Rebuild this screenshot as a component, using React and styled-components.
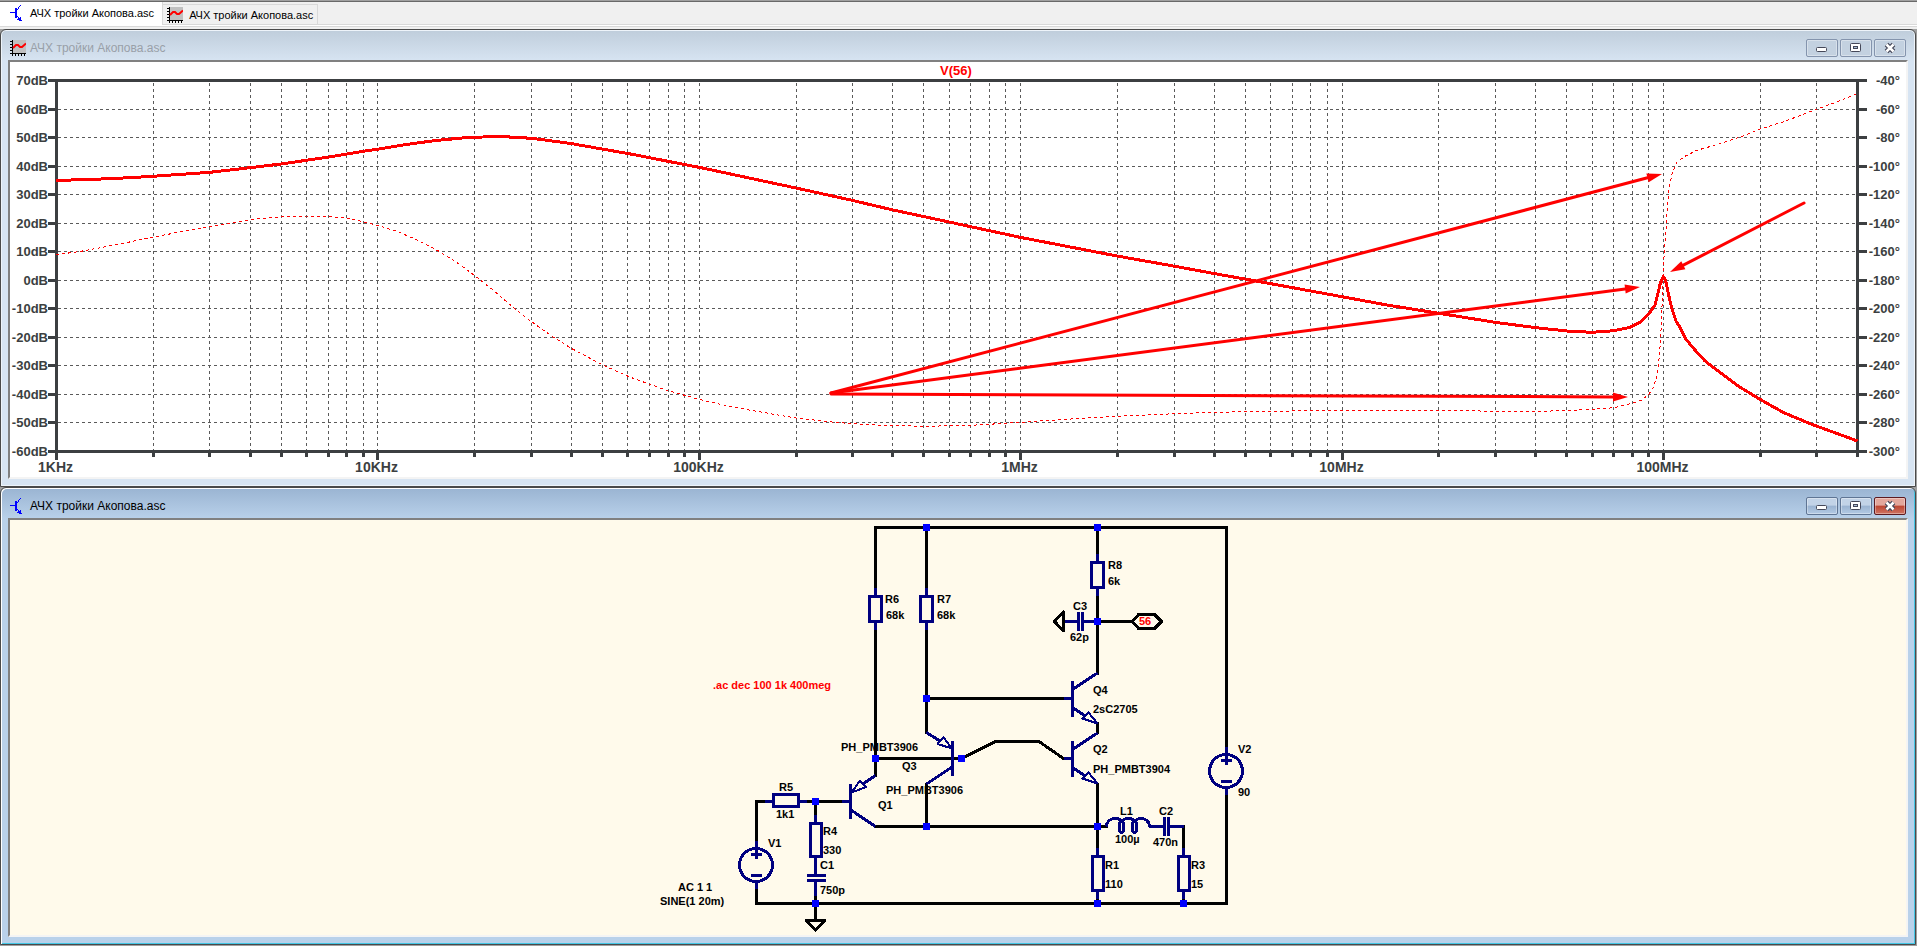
import React from "react";
import styled, { createGlobalStyle } from "styled-components";

const GlobalStyle = createGlobalStyle`
  * {
    box-sizing: border-box;
  }
  body {
    margin: 0;
    background: #a0a0a0;
  }
`;

const Desktop = styled.div`
  display: flex;
  flex-direction: column;
  padding: 0 1px 1px 0;
`;

const TabBar = styled.div`
  display: flex;
  align-items: flex-start;
  height: 29px;
  margin-right: -1px;
  background: linear-gradient(#f0f0f0 23px, #d9d9d9 23px, #d9d9d9 24px, #fff 24px, #fff 25px, #d9d9d9 25px, #d9d9d9 26px, #f0f0f0 26px);
  border-top: 1px solid #a0a0a0;
  box-shadow: inset 0 1px 0 #696969;
`;

const Tab = styled.button`
  display: flex;
  align-items: center;
  gap: ${(p) => (p.$active ? 4 : 6)}px;
  height: ${(p) => (p.$active ? 23 : 20)}px;
  margin: ${(p) => (p.$active ? 1 : 3)}px 0 0;
  padding: 0 ${(p) => (p.$active ? 8 : 4)}px ${(p) => (p.$active ? 2 : 0)}px ${(p) => (p.$active ? 10 : 4)}px;
  border: 0 solid #d9d9d9;
  border-width: ${(p) => (p.$active ? "0 1px 0 0" : "1px 1px 0 0")};
  background: ${(p) => (p.$active ? "#fff" : "#f0f0f0")};
  color: #000;
  font: 11px "Liberation Sans", sans-serif;
  white-space: nowrap;
`;

const Frame = styled.section`
  padding: 1px 7px 7px;
  border: 1px solid #4a4a4a;
  border-radius: 6px 6px 0 0;
  background: ${(p) =>
    p.$active
      ? "linear-gradient(#9ab4d2, #b9d1ea 31px)"
      : "linear-gradient(#bfcddb, #d7e4f2 31px)"};
  box-shadow: ${(p) =>
    p.$active
      ? "inset 1px 1px 0 #fff, inset -1px -1px 0 #43c6e4"
      : "inset 0 0 0 1px #eef4fa"};
`;

const TitleBar = styled.header`
  display: flex;
  align-items: center;
  gap: 4px;
  height: 29px;
  padding: 8px 2px 3px;
`;

const Title = styled.h2`
  flex: 1;
  margin: 0;
  color: ${(p) => (p.$active ? "#000" : "#99a0a8")};
  font: 12px "Liberation Sans", sans-serif;
`;

const Controls = styled.div`
  display: flex;
  gap: 2px;
`;

const blueFace = "linear-gradient(#c2d3e7 0 45%, #9ab3d1 50%, #b3cae4)";
const redFace = "linear-gradient(#e3a79c 0 45%, #bd4531 50%, #cf7463)";

const ControlButton = styled.button`
  display: flex;
  align-items: center;
  justify-content: center;
  width: 32px;
  height: 18px;
  padding: 0;
  border: 1px solid ${(p) => (p.$danger ? "#5d1a20" : p.$active ? "#5f7594" : "#8494ad")};
  border-radius: 2px;
  background: ${(p) => (p.$danger ? redFace : p.$active ? blueFace : "#c3d1e0")};
  box-shadow: inset 0 0 0 1px rgba(255, 255, 255, 0.35);
`;

const Pane = styled.div`
  border: 2px solid;
  border-color: #808080 #f4f4f4 #f4f4f4 #808080;
  background: ${(p) => p.$color};
`;

const Drawing = styled.svg`
  display: block;
  width: 100%;
  height: auto;
`;

const AxisText = styled.text`
  fill: #3c3f41;
  font: bold ${(p) => p.$size || 13}px "Liberation Sans", sans-serif;
`;

const TraceName = styled(AxisText)`
  fill: #f00;
`;

const PartText = styled.text`
  fill: ${(p) => p.$color || "#000"};
  font: bold 11px "Liberation Sans", sans-serif;
`;

function TransistorIcon() {
  return (
    <svg width="16" height="16" viewBox="0 0 16 16" shapeRendering="crispEdges" aria-hidden="true">
      <path d="M0 7h5v1h-5zM5 3h2v10h-2zM7 4h1v1h-1zM8 3h1v1h-1zM8 2h1v1h-1zM9 1h1v1h-1zM10 0h1v1h-1zM7 11h1v1h-1zM8 12h1v2h-1zM9 13h1v3h-1zM7 14h2v1h-2zM10 12h1v4h-1zM11 15h1v1h-1z" fill="#00f" />
    </svg>
  );
}

function WaveIcon() {
  return (
    <svg width="16" height="16" viewBox="0 0 16 16" aria-hidden="true">
      <path d="M2 0h14v13H2z" fill="#c0c0c0" />
      <path d="M2 0h1v16h-1zM0 13h16v1H0zM0 1h2v1H0zM0 4h2v1H0zM0 7h2v1H0zM0 10h2v1H0zM5 14h1v2h-1zM8 14h1v2h-1zM11 14h1v2h-1zM14 14h1v2h-1z" fill="#000" />
      <path d="M3 8L6 5H8L10 7H12L16 3.500" fill="none" stroke="#f00" strokeWidth="2" />
    </svg>
  );
}

function MinimizeIcon() {
  return (
    <svg width="12" height="12" viewBox="0 0 12 12" aria-hidden="true">
      <rect x="0.500" y="5.500" width="10" height="4" rx="1" fill="#fff" stroke="#454859" />
    </svg>
  );
}

function RestoreIcon() {
  return (
    <svg width="12" height="12" viewBox="0 0 12 12" aria-hidden="true">
      <rect x="0.500" y="1.500" width="10" height="8" rx="1" fill="#fff" stroke="#454859" />
      <rect x="3.500" y="4.500" width="4" height="2" fill="#a9bdd6" stroke="#454859" />
    </svg>
  );
}

function CloseIcon() {
  return (
    <svg width="12" height="12" viewBox="0 0 12 12" aria-hidden="true">
      <path d="M2.500 2.500L9.500 9.500M9.500 2.500L2.500 9.500" stroke="#454859" strokeWidth="5" />
      <path d="M2.500 2.500L9.500 9.500M9.500 2.500L2.500 9.500" stroke="#fff" strokeWidth="2.500" />
    </svg>
  );
}

function Window({ title, icon, active, color, children }) {
  return (
    <Frame $active={active}>
      <TitleBar>
        {icon}
        <Title $active={active}>{title}</Title>
        <Controls>
          <ControlButton $active={active} aria-label="Свернуть"><MinimizeIcon /></ControlButton>
          <ControlButton $active={active} aria-label="Развернуть"><RestoreIcon /></ControlButton>
          <ControlButton $active={active} $danger={active} aria-label="Закрыть"><CloseIcon /></ControlButton>
        </Controls>
      </TitleBar>
      <Pane $color={color}>{children}</Pane>
    </Frame>
  );
}

/* ---------- frequency response ---------- */

const LEFT = 56;
const RIGHT = 1857;
const TOP = 80;
const BOTTOM = 451;
const DECADE = 321.4;

const freqX = (decade, n) => Math.round(LEFT + DECADE * (decade + Math.log10(n))) + 0.5;
const rowY = (i) => Math.round(TOP + ((BOTTOM - TOP) * i) / 13) + 0.5;

const ticks = [];
for (let d = 0; d < 6; d++) {
  for (let n = 1; n < 10; n++) {
    if (d === 5 && n > 4) break;
    ticks.push({ x: freqX(d, n), major: n === 1, edge: (d === 0 && n === 1) || (d === 5 && n === 4) });
  }
}
const rows = Array.from({ length: 14 }, (_, i) => i);
const decades = ["1KHz", "10KHz", "100KHz", "1MHz", "10MHz", "100MHz"];

const magnitude = [
  [56, 180.5], [111, 178.7], [153, 176.3], [210, 172.3], [250, 167.7], [281, 164], [329, 157],
  [363, 151.3], [377, 149.3], [405, 144.7], [434, 140.7], [462, 138], [493, 136.5], [519, 137.3],
  [540, 139.3], [572, 143.7], [602, 149], [629, 153.7], [668, 161.3], [699, 167.3], [796, 188],
  [852, 200.3], [893, 210], [949, 222], [1020, 237.3], [1117, 256], [1175, 266.3], [1215, 273.7],
  [1256, 281], [1342, 296.7], [1387, 305], [1439, 313.3], [1495, 322.3], [1536, 327.7],
  [1567, 331], [1592, 332.3], [1614, 330.7], [1630, 327.3], [1641, 321.7], [1650, 312.3],
  [1655, 305], [1658, 293.3], [1660.7, 281.7], [1663.3, 276.5], [1665.7, 281], [1668.3, 293.3],
  [1671.7, 308.3], [1676, 321], [1680, 327.3], [1686, 339.3], [1695, 350], [1705, 361],
  [1720, 372.3], [1738, 386], [1760, 399.3], [1783, 412.3], [1810, 423.7], [1833, 432], [1857.5, 441],
];

const phase = [
  [56, 254.7], [81, 251.3], [111, 245.7], [153, 237.3], [181, 231.7], [210, 226.3], [250, 219.7],
  [281, 216.7], [307, 216], [329, 216.7], [347, 218.3], [363, 221.7], [377, 225.3], [397, 231.3],
  [417, 240], [438, 250.7], [458, 263.3], [474, 275], [493, 290], [513, 307.3], [531, 321.3],
  [554, 337.7], [572, 348.7], [602, 364.7], [629, 376.7], [649, 384], [668, 390.7], [699, 399.3],
  [725, 405.3], [753, 410.7], [796, 418], [835, 422.3], [852, 423.7], [884, 425.3], [925, 426.3],
  [971, 425.3], [1006, 423.3], [1035, 421.3], [1082, 418.3], [1117, 416.3], [1175, 413.7],
  [1215, 412.3], [1271, 411.3], [1320, 410.5], [1342, 410.5], [1453, 410.5], [1495, 411.3],
  [1536, 411.3], [1567, 410.7], [1592, 409.3], [1614, 407.7], [1632, 403.3], [1641, 400.3],
  [1649, 394.3], [1653, 387.7], [1656.7, 376.7], [1659.3, 356.7], [1660.7, 336.7], [1662, 306.7],
  [1663.3, 266.7], [1665.3, 240], [1667.3, 210], [1669, 190], [1671.7, 175], [1676.7, 162.3],
  [1685, 156.3], [1697, 150.3], [1720, 143.7], [1743, 136], [1760, 129], [1783, 122],
  [1810, 111.7], [1833, 103.3], [1857, 93.7],
];

const toPoints = (data) => data.map((p) => p.join(",")).join(" ");

const arrows = [
  [831, 393, 1662, 174],
  [831, 393, 1640, 287],
  [831, 394, 1628, 397],
  [1804, 203, 1670, 272],
];

function Arrow({ line: [x1, y1, x2, y2] }) {
  const len = Math.hypot(x2 - x1, y2 - y1);
  const ux = (x2 - x1) / len;
  const uy = (y2 - y1) / len;
  const bx = x2 - ux * 15;
  const by = y2 - uy * 15;
  const head = [
    [x2, y2],
    [bx - uy * 4.5, by + ux * 4.5],
    [bx + uy * 4.5, by - ux * 4.5],
  ];
  return (
    <g>
      <line x1={x1} y1={y1} x2={bx} y2={by} stroke="#f00" strokeWidth="3" strokeLinecap="round" />
      <polygon points={toPoints(head)} fill="#f00" />
    </g>
  );
}

function Plot() {
  return (
    <Drawing viewBox="10 62 1896 415" role="img" aria-label="V(56)">
      <g shapeRendering="crispEdges" fill="none">
        <g stroke="#5a5a5a" strokeDasharray="3 3">
          {ticks.filter((t) => !t.edge).map((t) => (
            <line key={t.x} x1={t.x} x2={t.x} y1="83" y2="450" />
          ))}
          {rows.slice(1, 13).map((i) => (
            <line key={i} x1="58" x2="1856" y1={rowY(i)} y2={rowY(i)} />
          ))}
        </g>
        <g stroke="#3c3f41" strokeWidth="3">
          <rect x={LEFT + 0.5} y={TOP + 0.5} width={RIGHT - LEFT} height={BOTTOM - TOP} />
          {rows.map((i) => (
            <path key={i} d={`M48 ${rowY(i)}H57M1857 ${rowY(i)}H1867`} />
          ))}
          {ticks.map((t) => (
            <line key={t.x} x1={t.x} x2={t.x} y1="451" y2={t.major ? 460 : 457} />
          ))}
        </g>
        <polyline points={toPoints(phase)} stroke="#f00" strokeDasharray="3 3" />
        <polyline points={toPoints(magnitude)} stroke="#f00" strokeWidth="3" strokeLinejoin="round" />
      </g>
      {arrows.map((a) => (
        <Arrow key={a.join()} line={a} />
      ))}
      {rows.map((i) => (
        <g key={i}>
          <AxisText x="48" y={rowY(i) + 4.5} textAnchor="end">{70 - i * 10}dB</AxisText>
          <AxisText x="1900" y={rowY(i) + 4.5} textAnchor="end">{-40 - i * 20}°</AxisText>
        </g>
      ))}
      {decades.map((label, d) => (
        <AxisText key={label} $size={14} x={freqX(d, 1) - 1} y="472" textAnchor="middle">{label}</AxisText>
      ))}
      <TraceName x="956" y="75" textAnchor="middle">V(56)</TraceName>
    </Drawing>
  );
}

/* ---------- schematic ---------- */

const wires = [
  "M875.5 588V527.5H1226.5V751",
  "M875.5 630V775.5",
  "M926.5 527.5V588M926.5 630V732.5M926.5 784V826.5",
  "M926.5 698.5H1064",
  "M875.5 758.5H961.5L995.5 741.5H1039L1063.5 758.5",
  "M875.5 826.5H1107",
  "M1097.5 527.5V554M1097.5 596V673.5M1097.5 723.5V732.5M1097.5 784V848M1097.5 894V903.5",
  "M1097.5 621.5H1132",
  "M1183.5 826V848M1183.5 894V903.5",
  "M765 801.5H756.5V843M756.5 889V903.5H1226.5V792",
  "M807 801.5H842M815.5 801.5V816M815.5 896V920",
];

const nodes = [
  [926.5, 527.5], [1097.5, 527.5], [1097.5, 621.5], [926.5, 698.5], [875.5, 758.5],
  [961.5, 758.5], [815.5, 801.5], [926.5, 826.5], [1097.5, 826.5], [815.5, 903.5],
  [1097.5, 903.5], [1183.5, 903.5],
];

const labels = [
  ["R6", 885, 603], ["68k", 886, 619], ["R7", 937, 603], ["68k", 937, 619],
  ["C3", 1073, 610], ["62p", 1070, 641], ["R8", 1108, 569], ["6k", 1108, 585],
  ["Q4", 1093, 694], ["2sC2705", 1093, 713], ["PH_PMBT3906", 841, 751], ["Q3", 902, 770],
  ["PH_PMBT3906", 886, 794], ["Q1", 878, 809], ["Q2", 1093, 753], ["PH_PMBT3904", 1093, 773],
  ["V2", 1238, 753], ["90", 1238, 796], ["L1", 1120, 815], ["100µ", 1115, 843],
  ["C2", 1159, 815], ["470n", 1153, 846], ["R1", 1105, 869], ["110", 1105, 888],
  ["R3", 1191, 869], ["15", 1191, 888], ["R5", 779, 791], ["1k1", 776, 818],
  ["R4", 823, 835], ["330", 823, 854], ["C1", 820, 869], ["750p", 820, 894],
  ["V1", 768, 847], ["AC 1 1", 678, 891], ["SINE(1 20m)", 660, 905],
];

function Resistor({ x, y, w = 12, h = 25 }) {
  return (
    <g>
      <path d={`M${x} ${y - 8.5}V${y}M${x} ${y + h}v8`} />
      <rect x={Math.floor(x - w / 2) + 0.5} y={y} width={w} height={h} />
    </g>
  );
}

function Source({ x, y }) {
  return (
    <g>
      <circle cx={x} cy={y} r="16.500" />
      <path d={`M${x + 0.5} ${y - 24}v18M${x - 5.5} ${y - 10.5}h11M${x - 5.5} ${y + 10.5}h11M${x + 0.5} ${y + 16}v8`} />
    </g>
  );
}

/* npn, x/y is the point where the base lead meets the bar */
function Npn({ x, y }) {
  return (
    <g transform={`translate(${x} ${y})`}>
      <path d="M-9 0H0M0 -18V18M0 -9L25 -25.500M0 9L12 17" />
      <path d="M16 14L10 20L25 25Z" strokeWidth="2" />
    </g>
  );
}

function Schematic() {
  return (
    <Drawing viewBox="10 520 1896 415" role="img" aria-label="АЧХ тройки Акопова">
      <g shapeRendering="crispEdges" fill="none" strokeWidth="3" strokeLinejoin="round">
        <g stroke="#000" strokeLinecap="round">
          {wires.map((d) => (
            <path key={d} d={d} />
          ))}
          <path d="M806.5 920.5H825L815.500 930Z" />
          <path d="M1063.500 612V631L1054.500 621.500Z" />
          <path d="M1132.500 621.500L1138.500 614.500H1154.500L1161.500 621.500L1154.500 628.500H1138.500Z" />
        </g>
        <g stroke="#000080">
          <Resistor x={875.5} y={596.5} />
          <Resistor x={926.5} y={596.5} />
          <Resistor x={1097.5} y={562.5} />
          <Resistor x={815.5} y={823.5} w={11} h={33} />
          <Resistor x={1097.5} y={856.5} w={11} h={34} />
          <Resistor x={1183.5} y={856.5} w={11} h={34} />
          <path d="M765 801.5H774M799 801.5H807" />
          <rect x="773.500" y="794.500" width="25" height="12" />
          <Source x={756} y={865} />
          <Source x={1226} y={771} />
          <Npn x={1072.5} y={698.5} />
          <Npn x={1072.5} y={758.5} />
          {/* Q3 */}
          <path d="M952.5 740.5V776M926.5 732.5L940 741M952 767L926.5 784" />
          <path d="M943.500 737.500L937.500 744L952 748.500Z" strokeWidth="2" />
          {/* Q1 */}
          <path d="M842 801.5H850M850.5 783.500V819M875.5 775.500L863 784M851 810L875.5 826.5" />
          <path d="M860 780.500L866 787L851.500 792.500Z" strokeWidth="2" />
          {/* capacitors */}
          <path d="M807 875.5H825.5M807 880.5H825.5M815.5 864V875.5M815.5 881V896" />
          <path d="M1078.5 612V631M1082.5 612V631M1065 621.5H1078M1083 621.5H1095" />
          <path d="M1164.5 817V836M1168.5 817V836M1149 826.5H1164M1169 826.5H1184" />
          {/* inductor */}
          <path d="M1106 826.5C1107 821 1111 818.5 1115 818.5C1121 818.5 1124 822 1124 827C1124 834 1119 834 1119 827C1119 821 1124 818.5 1128 818.5C1134 818.5 1137 822 1137 827C1137 834 1132 834 1132 827C1132 821 1137 818.5 1141 818.5C1146 818.5 1149 822 1150 826.5" />
        </g>
        <g fill="#00f">
          {nodes.map(([x, y]) => (
            <rect key={`${x}-${y}`} x={x - 3.5} y={y - 3.5} width="7" height="7" />
          ))}
        </g>
      </g>
      {labels.map(([text, x, y]) => (
        <PartText key={`${text}-${x}-${y}`} x={x} y={y}>{text}</PartText>
      ))}
      <PartText $color="#f00" x="713" y="689">.ac dec 100 1k 400meg</PartText>
      <PartText $color="#f00" x="1139" y="625">56</PartText>
    </Drawing>
  );
}

const FILE = "АЧХ тройки Акопова.asc";

export default function App() {
  return (
    <Desktop>
      <GlobalStyle />
      <TabBar>
        <Tab $active><TransistorIcon />{FILE}</Tab>
        <Tab><WaveIcon />{FILE}</Tab>
      </TabBar>
      <Window title={FILE} icon={<WaveIcon />} color="#fff">
        <Plot />
      </Window>
      <Window title={FILE} icon={<TransistorIcon />} color="#fffaeb" active>
        <Schematic />
      </Window>
    </Desktop>
  );
}
